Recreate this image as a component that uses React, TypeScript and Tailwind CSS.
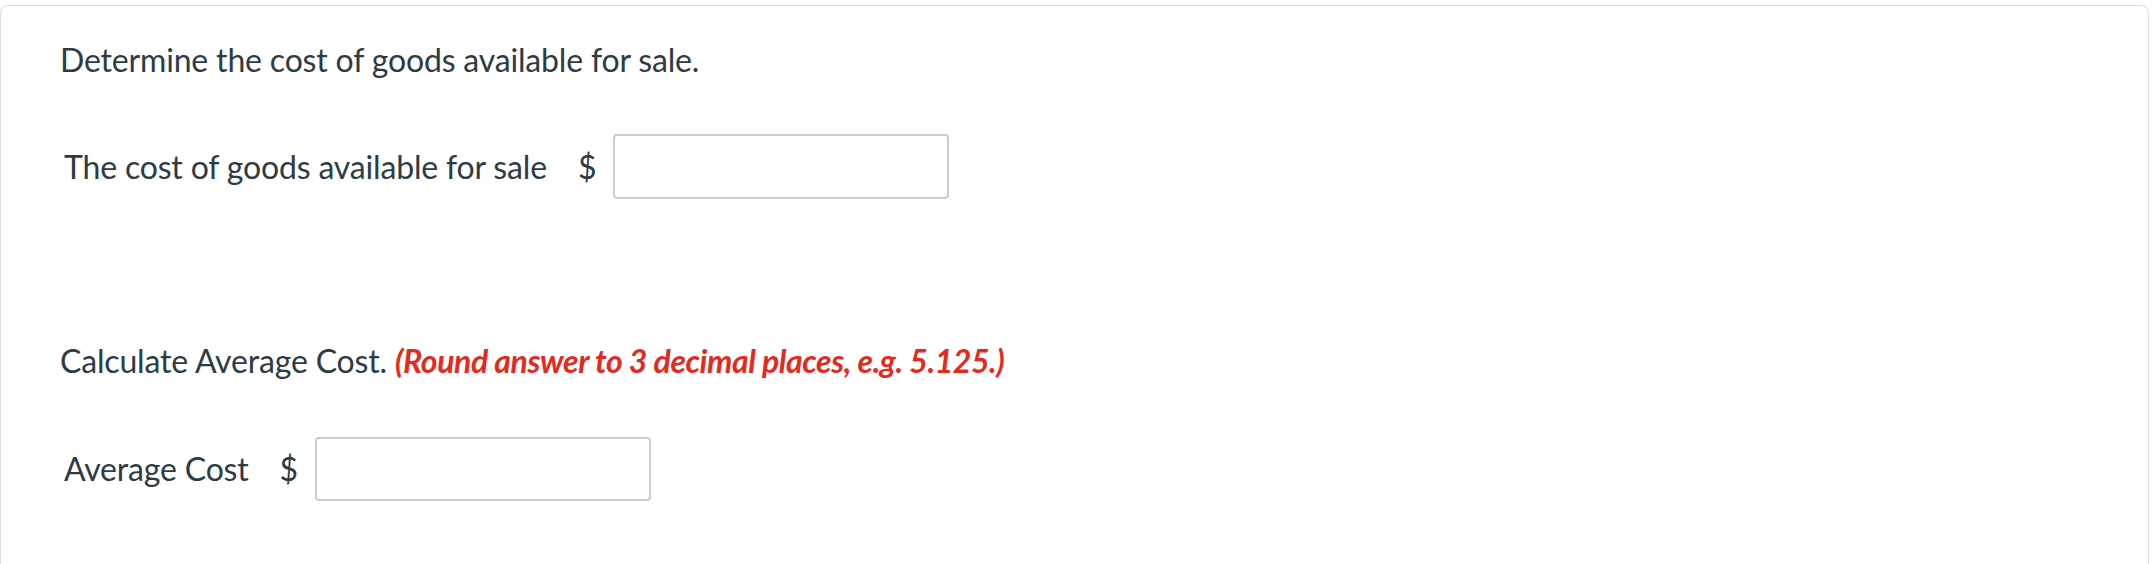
export default function App() {
  return (
    <div className="h-[564px] overflow-hidden bg-white pt-[5px] font-['Lato','Liberation_Sans',sans-serif] text-[32px] leading-[48px] tracking-[-0.17px] text-[#2d3b45]">
      <div className="h-[600px] w-[2149px] rounded-t-[8px] border border-b-0 border-[#dcdcdc] pl-[59px] pt-[30px]">
        <p>Determine the cost of goods available for sale.</p>

        <div className="mt-[50px] flex items-center pl-[4px]">
          <span>The cost of goods available for sale</span>
          <span className="ml-[31px] mr-[17px]">$</span>
          <input
            type="text"
            aria-label="The cost of goods available for sale"
            className="h-[65px] w-[336px] rounded-[4px] border-2 border-[#cccccc] bg-white"
          />
        </div>

        <p className="mt-[138px]">
          Calculate Average Cost.{" "}
          <span className="font-bold italic tracking-[-0.42px] text-[#e22b1e]">
            (Round answer to 3 decimal places, e.g. 5.125.)
          </span>
        </p>

        <div className="mt-[52px] flex items-center pl-[4px]">
          <span>Average Cost</span>
          <span className="ml-[31px] mr-[17px]">$</span>
          <input
            type="text"
            aria-label="Average Cost"
            className="h-[64px] w-[336px] rounded-[4px] border-2 border-[#cccccc] bg-white"
          />
        </div>
      </div>
    </div>
  );
}
